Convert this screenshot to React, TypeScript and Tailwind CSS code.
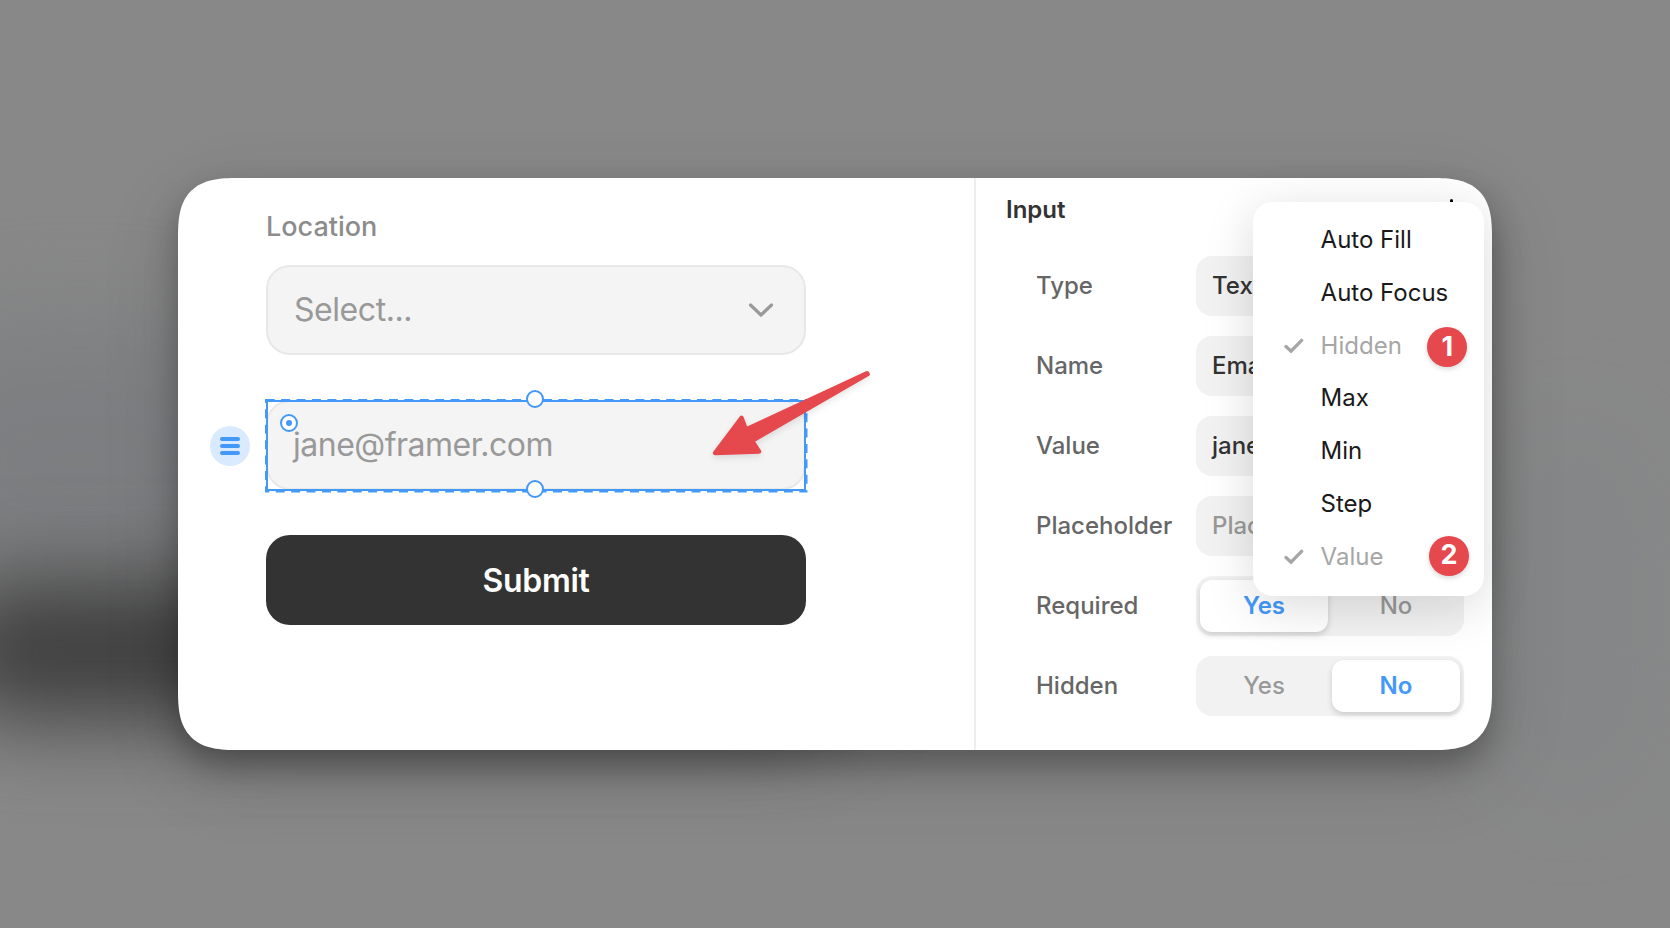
import type { ReactNode } from "react";

const segment = "flex h-[52px] w-32 items-center justify-center rounded-xl";
const segmentOn = "bg-white font-semibold text-[#4499f8] shadow-[0_3px_6px_rgba(0,0,0,0.16)]";
const segmentOff = "text-[#999]";

function Toggle({ value }: { value: "Yes" | "No" }) {
  return (
    <div className="flex h-[60px] w-[268px] items-center gap-1 rounded-2xl bg-[#f2f2f2] px-1">
      {["Yes", "No"].map((option) => (
        <div key={option} className={`${segment} ${option === value ? segmentOn : segmentOff}`}>
          {option}
        </div>
      ))}
    </div>
  );
}

function Field({ children, muted = false }: { children: ReactNode; muted?: boolean }) {
  return (
    <div
      className={`flex h-[60px] w-[268px] items-center rounded-2xl bg-[#f2f2f2] px-4 ${muted ? "text-[#999]" : "text-[#333]"}`}
    >
      {children}
    </div>
  );
}

function Row({ label, children }: { label: string; children: ReactNode }) {
  return (
    <div className="flex items-center">
      <div className="w-[160px] shrink-0 text-[#666]">{label}</div>
      {children}
    </div>
  );
}

const menuItems = [
  { label: "Auto Fill" },
  { label: "Auto Focus" },
  { label: "Hidden", checked: true },
  { label: "Max" },
  { label: "Min" },
  { label: "Step" },
  { label: "Value", checked: true },
];

function Menu() {
  return (
    <div className="absolute top-[24px] left-[1075px] h-[394px] w-[231px] rounded-[20px] bg-white pt-[11.7px] shadow-[0_10px_50px_rgba(0,0,0,0.15)]">
      {menuItems.map((item) => (
        <div
          key={item.label}
          className={`flex h-[52.8px] items-center text-2xl ${item.checked ? "text-[#a6a6a6]" : "text-[#1a1a1a]"}`}
        >
          <div className="flex w-[67.6px] justify-center pl-[14px]">
            {item.checked && (
              <svg width="20" height="16" viewBox="0 0 20 16" fill="none">
                <path d="M2 8.6L7 13.2L17.6 2.4" stroke="#a6a6a6" strokeWidth="3.4" strokeLinecap="round" />
              </svg>
            )}
          </div>
          {item.label}
        </div>
      ))}
      <Badge className="top-[125px] left-[174.4px]">1</Badge>
      <Badge className="top-[333.5px] left-[176px]">2</Badge>
    </div>
  );
}

function Badge({ className, children }: { className: string; children: ReactNode }) {
  return (
    <div
      className={`absolute flex size-10 items-center justify-center rounded-full bg-[#e5484d] text-[27px] font-bold text-white shadow-[0_2px_5px_rgba(0,0,0,0.16)] ${className}`}
    >
      {children}
    </div>
  );
}

function Handle({ className }: { className: string }) {
  return <div className={`absolute size-[18px] rounded-full border-2 border-[#4499f8] bg-white ${className}`} />;
}

function Arrow() {
  return (
    <svg
      className="absolute top-[-35px] left-[440px] overflow-visible drop-shadow-[0_3px_3px_rgba(0,0,0,0.1)]"
      width="170"
      height="100"
      viewBox="706 365 170 100"
    >
      <path
        d="M715 453L741.5 417.8L746 429.5L867 373.3L867.6 374.2L752 440.8L759 451.5Z"
        fill="#e5484d"
        stroke="#e5484d"
        strokeWidth="4.4"
        strokeLinejoin="round"
      />
    </svg>
  );
}

/* Soft tinted patches behind the card */
function Backdrop() {
  return (
    <>
      <div className="absolute top-[330px] left-[-120px] h-[260px] w-[400px] rounded-full bg-[#74777b] opacity-60 blur-[60px]" />
      <div className="absolute top-[430px] left-[1500px] h-[360px] w-[140px] rounded-full bg-[#7d8386] opacity-40 blur-[50px]" />
      <div className="absolute top-[580px] left-[-60px] h-[140px] w-[910px] rounded-full bg-[#3e3e3e] blur-[44px]" />
    </>
  );
}

export default function App() {
  return (
    <div className="relative flex h-[928px] w-[1670px] items-center justify-center overflow-hidden bg-[#888] font-['Inter',sans-serif]">
      <Backdrop />
      <div className="relative flex h-[572px] w-[1314px] rounded-[60px] bg-white shadow-[0_16px_32px_rgba(0,0,0,0.28),0_24px_80px_rgba(0,0,0,0.13)] [corner-shape:superellipse(1.5)]">
        <div className="w-[796px] pt-[33px] pl-[88px]">
          <div className="text-[27px] leading-8 font-medium text-[#8c8c8c]">Location</div>
          <div className="mt-[22px] flex h-[90px] w-[540px] items-center justify-between rounded-3xl border-2 border-[#e8e8e8] bg-[#f4f4f4] pr-[30px] pl-[26px] text-[32px] tracking-[-0.45px] text-[#999]">
            <span>Select...</span>
            <svg width="26" height="16" viewBox="0 0 26 16" fill="none">
              <path
                d="M2.5 3L13 13L23.5 3"
                stroke="#999"
                strokeWidth="3.2"
                strokeLinecap="round"
                strokeLinejoin="round"
              />
            </svg>
          </div>
          <div className="relative mt-[45px] h-[90px] w-[540px]">
            <div className="flex h-full items-center rounded-3xl border-2 border-[#e8e8e8] bg-[#f4f4f4] pl-[25px] text-[32px] tracking-[-0.5px] text-[#999]">
              jane@framer.com
            </div>
            <svg className="absolute inset-0 overflow-visible" width="540" height="90" fill="none">
              <rect x="-0.25" y="-0.25" width="541" height="92" stroke="#4499f8" strokeWidth="1.5" strokeDasharray="9 6.4" />
              <rect x="1" y="1" width="538" height="89" stroke="#4499f8" strokeWidth="2" />
            </svg>
            <Handle className="top-[-10px] left-[260px]" />
            <Handle className="top-[80px] left-[260px]" />
            <div className="absolute top-[14px] left-[14px] flex size-[18px] items-center justify-center rounded-full border-2 border-[#4499f8] bg-white">
              <div className="size-1.5 rounded-full bg-[#4499f8]" />
            </div>
            <div className="absolute top-[26px] left-[-56px] flex size-10 flex-col items-center justify-center gap-[3px] rounded-full bg-[#d9eafe]">
              <div className="h-1 w-5 rounded-full bg-[#4499f8]" />
              <div className="h-1 w-5 rounded-full bg-[#4499f8]" />
              <div className="h-1 w-5 rounded-full bg-[#4499f8]" />
            </div>
            <Arrow />
          </div>
          <div className="mt-[45px] flex h-[90px] w-[540px] items-center justify-center rounded-3xl bg-[#333] pt-px text-[32px] font-semibold tracking-[-0.3px] text-white">
            Submit
          </div>
        </div>
        <div className="relative flex-1 border-l-2 border-[#eee] pt-[17px] pl-[30px] text-2xl font-medium">
          <div className="h-[61px] leading-[29px] font-semibold text-[#333]">Input</div>
          <div className="absolute top-[21px] left-[474px] h-6 w-[3px] rounded-full bg-black" />
          <div className="flex flex-col gap-5 pl-[30px]">
            <Row label="Type">
              <Field>Text</Field>
            </Row>
            <Row label="Name">
              <Field>Email</Field>
            </Row>
            <Row label="Value">
              <Field>jane</Field>
            </Row>
            <Row label="Placeholder">
              <Field muted>Place</Field>
            </Row>
            <Row label="Required">
              <Toggle value="Yes" />
            </Row>
            <Row label="Hidden">
              <Toggle value="No" />
            </Row>
          </div>
        </div>
        <Menu />
      </div>
    </div>
  );
}
